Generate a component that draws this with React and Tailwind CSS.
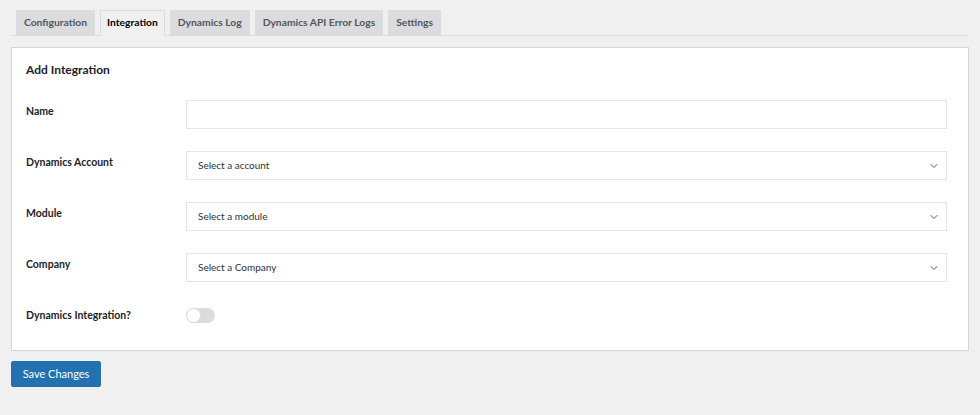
import React, { useState } from 'react';
import { ChevronDown } from 'lucide-react';

const tabs = ['Configuration', 'Integration', 'Dynamics Log', 'Dynamics API Error Logs', 'Settings'];

const SelectBox = ({ placeholder }) => (
  <div className="flex h-[29px] flex-1 items-center justify-between border border-[#e6e4ee] bg-white pl-[11px] pr-[6px] text-[10px] text-[#2c3338]">
    <span>{placeholder}</span>
    <ChevronDown size={12} strokeWidth={2} className="text-[#50575e]" />
  </div>
);

const Row = ({ label, children, last }) => (
  <div className={`flex items-start ${last ? 'h-[32px]' : 'h-[51px]'}`}>
    <div className="w-[160px] pt-[1px] text-[10.5px] font-bold leading-[20px] text-[#1d2327]">{label}</div>
    <div className="flex flex-1 items-center">{children}</div>
  </div>
);

const App = () => {
  const [active, setActive] = useState('Integration');
  const [enabled, setEnabled] = useState(false);

  return (
    <div className="min-h-screen bg-[#f0f0f1] px-[11px] pt-[10px]" style={{ fontFamily: 'Lato, "Noto Sans", sans-serif' }}>
      <nav className="flex gap-[5px] border-b border-[#dcdcde] pl-[5px]">
        {tabs.map((t) => (
          <button
            key={t}
            onClick={() => setActive(t)}
            className={
              t === active
                ? '-mb-px h-[26px] border border-b-[#f0f0f1] border-[#dcdcde] bg-[#f0f0f1] px-[6px] text-[10.3px] font-bold text-[#000]'
                : 'h-[25px] border border-[#dcdcde] bg-[#dcdcde] px-[7px] text-[10.3px] font-bold text-[#50575e]'
            }
          >
            {t}
          </button>
        ))}
      </nav>

      <div className="mt-[11px] border border-[#d5d5d8] bg-white px-[14px] pt-[13px] pb-[14px]">
        <h2 className="text-[12px] font-bold leading-[18px] text-[#1d2327]">Add Integration</h2>

        <div className="mt-[21px] pr-[7px]">
          <Row label="Name">
            <input className="h-[29px] flex-1 border border-[#e6e4ee] bg-white px-[11px] text-[10px] outline-none" />
          </Row>
          <Row label="Dynamics Account">
            <SelectBox placeholder="Select a account" />
          </Row>
          <Row label="Module">
            <SelectBox placeholder="Select a module" />
          </Row>
          <Row label="Company">
            <SelectBox placeholder="Select a Company" />
          </Row>
          <Row label="Dynamics Integration?" last>
            <button
              onClick={() => setEnabled(!enabled)}
              className={`mt-[4px] flex h-[15px] w-[29px] items-center rounded-full ${enabled ? 'bg-[#2271b1]' : 'bg-[#dcdcde]'}`}
            >
              <span
                className={`h-[15px] w-[15px] rounded-full border border-[#dcdcde] bg-white ${enabled ? 'ml-[14px]' : ''}`}
              />
            </button>
          </Row>
        </div>
      </div>

      <button className="mt-[10px] h-[26px] w-[90px] rounded-[2px] border border-[#2271b1] bg-[#2271b1] text-[11px] text-white">
        Save Changes
      </button>
    </div>
  );
};

export default App;
